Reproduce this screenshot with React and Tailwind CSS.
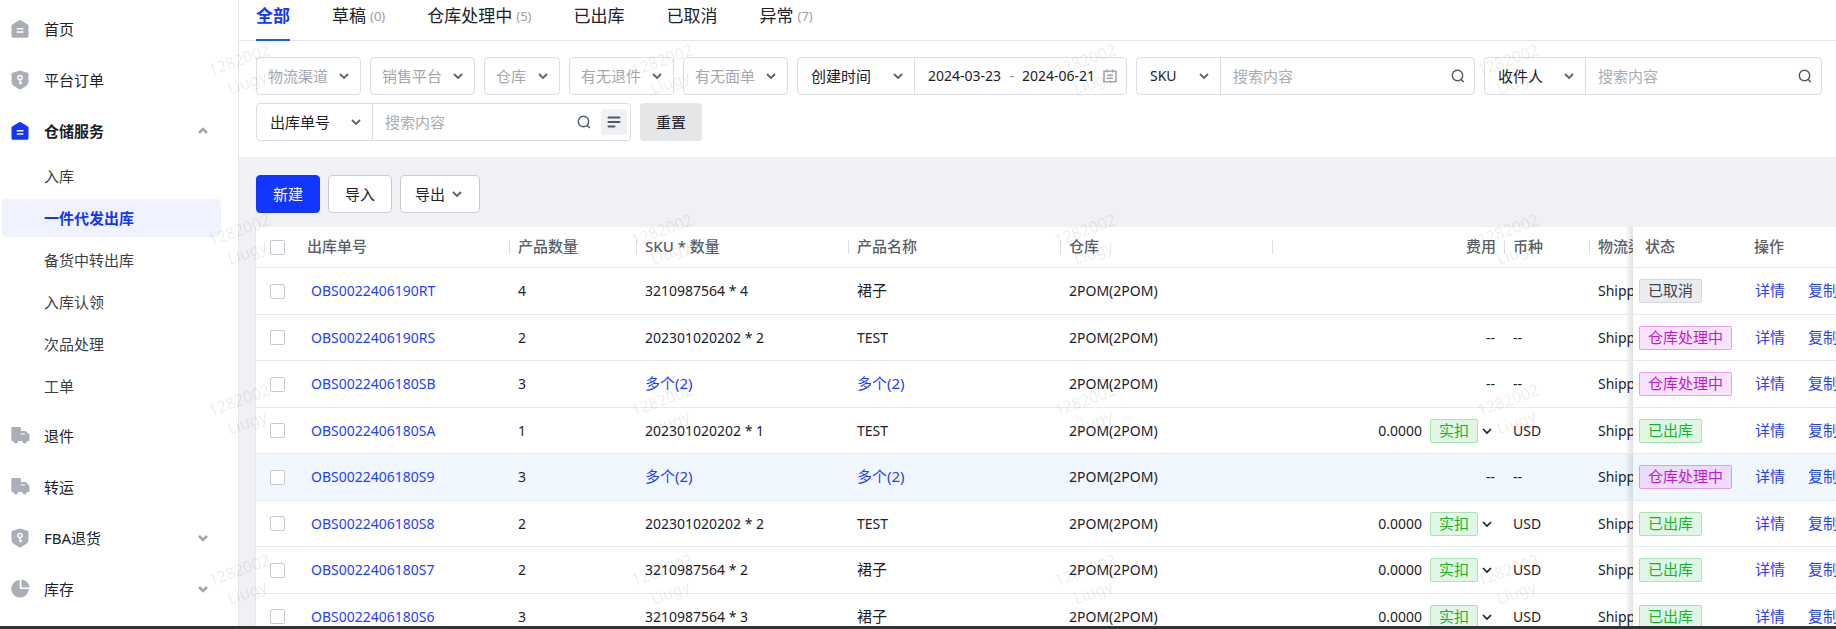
import React from "react";

function Chevron({ className = "", up = false, weight = 2 }) {
  return (
    <svg viewBox="0 0 16 16" className={className} fill="none" stroke="currentColor" strokeWidth={weight} aria-hidden="true">
      <path d={up ? "M4 10l4-4 4 4" : "M4 6l4 4 4-4"} />
    </svg>
  );
}

function SearchIcon() {
  return (
    <svg viewBox="0 0 14 14" className="size-3.5 shrink-0 text-[#4e5969]" fill="none" stroke="currentColor" strokeWidth="1.4" aria-hidden="true">
      <circle cx="6.5" cy="6.5" r="5.2" />
      <path d="M10.2 10.4l2.6 2.6" />
    </svg>
  );
}

function HouseIcon() {
  return (
    <svg viewBox="0 0 18 18" className="size-[18px]" aria-hidden="true">
      <path fill="currentColor" d="M8.2.3a1.6 1.6 0 0 1 1.6 0l7 4.1c.4.3.7.7.7 1.2v10.6c0 .9-.6 1.5-1.5 1.5H2C1.100 17.700.5 17.100.5 16.200V5.600c0-.5.3-.9.7-1.200z" />
      <path stroke="#fff" strokeWidth="1.400" d="M5.800 8.700h6.600M5.800 12h6.600" />
    </svg>
  );
}

function ShieldIcon() {
  return (
    <svg viewBox="0 0 18 20" className="h-5 w-[18px]" aria-hidden="true">
      <path fill="currentColor" d="M9 .6l7.600 2.200c.5.2.9.6.9 1.200v7.500c0 1.700-.7 3.200-2.100 4.300L9.900 19.300a1.500 1.500 0 0 1-1.800 0l-5.500-3.500A5.200 5.200 0 0 1 .5 11.500V4c0-.6.4-1 .9-1.200z" />
      <circle cx="9" cy="7.600" r="2.100" fill="none" stroke="#fff" strokeWidth="1.400" />
      <path fill="none" stroke="#fff" strokeWidth="1.400" d="M9 9.600v5M9 12.700h2.200" />
    </svg>
  );
}

function TruckIcon() {
  return (
    <svg viewBox="0 0 19 17" className="h-[17px] w-[19px]" fill="currentColor" aria-hidden="true">
      <path d="M1.200 0H9c.5 0 .9.400.9.900v3H14c.500 0 .900.200 1.200.600l2.800 3c.300.300.500.700.500 1.100V13c0 .600-.400 1-1 1h-16C.900 14 .3 13.500.3 12.800V1c0-.600.400-1 .900-1z" />
      <circle cx="4.800" cy="14.300" r="2.200" />
      <circle cx="13.600" cy="14.300" r="2.200" />
      <path stroke="#fff" strokeWidth="1" d="M9.500 7h4.500" />
    </svg>
  );
}

function PieIcon() {
  return (
    <svg viewBox="0 0 19 19" className="size-[19px]" fill="currentColor" aria-hidden="true">
      <path d="M8.700 1v7.700c0 .9.500 1.400 1.400 1.400h7.700A8.800 8.800 0 1 1 8.700 1z" />
      <path d="M10.500.5a8.400 8.400 0 0 1 8 8h-7c-.6 0-1-.4-1-1z" />
    </svg>
  );
}

const TOP_ITEMS = [
  { label: "首页", icon: HouseIcon },
  { label: "平台订单", icon: ShieldIcon },
  { label: "仓储服务", icon: HouseIcon, open: true },
];
const SUB_ITEMS = ["入库", "一件代发出库", "备货中转出库", "入库认领", "次品处理", "工单"];
const BOTTOM_ITEMS = [
  { label: "退件", icon: TruckIcon },
  { label: "转运", icon: TruckIcon },
  { label: "FBA退货", icon: ShieldIcon, closed: true },
  { label: "库存", icon: PieIcon, closed: true },
];

function NavItem({ item }) {
  const Icon = item.icon;
  return (
    <a href="#" className={`flex h-[51px] items-center pr-[27px] pl-[11px] text-[#1d2129] ${item.open ? "font-bold" : ""}`}>
      <span className={`flex w-[33px] shrink-0 ${item.open ? "text-[#1236ff]" : "text-[#a9aeb8]"}`}>
        <Icon />
      </span>
      <span className="flex-1">{item.label}</span>
      {(item.open || item.closed) && <Chevron up={item.open} className="size-4 text-[#a0a5af]" weight={2.5} />}
    </a>
  );
}

function Sidebar() {
  return (
    <nav className="w-[239px] shrink-0 overflow-hidden border-r border-[#e5e6eb] bg-white pt-[3px]">
      {TOP_ITEMS.map((item) => (
        <NavItem key={item.label} item={item} />
      ))}
      <div className="flex flex-col gap-1 pt-px pr-[17px] pb-[5px] pl-0.5">
        {SUB_ITEMS.map((label) => (
          <a
            key={label}
            href="#"
            className={`flex h-[38px] items-center rounded pl-[42px] ${
              label === "一件代发出库" ? "bg-[#f0f3ff] font-bold text-[#1236ff]" : "text-[#3a3f47]"
            }`}
          >
            {label}
          </a>
        ))}
      </div>
      {BOTTOM_ITEMS.map((item) => (
        <NavItem key={item.label} item={item} />
      ))}
    </nav>
  );
}

const TABS = [
  { label: "全部", active: true },
  { label: "草稿", count: 0 },
  { label: "仓库处理中", count: 5 },
  { label: "已出库" },
  { label: "已取消" },
  { label: "异常", count: 7 },
];

function Tabs() {
  return (
    <div className="flex h-[41px] gap-[42px] border-b border-[#e5e6eb] pl-[17px] text-[17px]">
      {TABS.map((tab) => (
        <button
          key={tab.label}
          type="button"
          className={`flex h-[41px] items-center gap-1 border-b-2 pb-[7px] whitespace-nowrap ${
            tab.active ? "border-[#165dff] font-bold text-[#1236ff]" : "border-transparent text-[#1d2129]"
          }`}
        >
          {tab.label}
          {tab.count !== undefined && <span className="text-[13px] text-[#9a9fa8]">({tab.count})</span>}
        </button>
      ))}
    </div>
  );
}

function Picker({ label, className, selectClass }) {
  return (
    <label className={`grid h-full items-center ${className}`}>
      <select aria-label={label} className={`col-start-1 row-start-1 h-full w-full appearance-none bg-transparent outline-none ${selectClass}`}>
        <option>{label}</option>
      </select>
      <Chevron className="pointer-events-none col-start-1 row-start-1 mr-2 size-4 justify-self-end text-[#5a626f]" weight={1.8} />
    </label>
  );
}

const BOX = "h-[38px] rounded border border-[#dcdee3] bg-white";

function PlainSelect({ label, className }) {
  return (
    <div className={`${BOX} ${className}`}>
      <Picker label={label} className="" selectClass="pl-[11px] text-[#a3a7af]" />
    </div>
  );
}

function SearchGroup({ label, className, pickerClass, small, more }) {
  return (
    <div className={`flex items-center ${BOX} ${className}`}>
      <Picker label={label} className={`shrink-0 border-r border-[#dcdee3] ${pickerClass}`} selectClass={`pl-[13px] text-[#1d2129] ${small ? "text-sm" : ""}`} />
      <input aria-label={`${label}搜索`} placeholder="搜索内容" className="h-full min-w-0 flex-1 bg-transparent pl-3 outline-none placeholder:text-[#a9adb5]" />
      <SearchIcon />
      {more ? (
        <button type="button" aria-label="批量搜索" className="mr-[3px] ml-2.5 flex size-[26px] shrink-0 items-center justify-center rounded bg-[#f0f1f5] text-[#4e5969]">
          <svg viewBox="0 0 14 12" className="h-3 w-3.5" stroke="currentColor" strokeWidth="2" strokeLinecap="round" aria-hidden="true">
            <path d="M1.500 1.500h11M1.500 6h11M1.500 10.500h6" />
          </svg>
        </button>
      ) : (
        <span className="w-[9px] shrink-0" />
      )}
    </div>
  );
}

function Filters() {
  return (
    <form className="flex flex-wrap gap-x-[9px] gap-y-2 border-b border-[#eceef2] pt-4 pr-3.5 pb-4 pl-[17px]">
      <PlainSelect label="物流渠道" className="w-[105px]" />
      <PlainSelect label="销售平台" className="w-[105px]" />
      <PlainSelect label="仓库" className="w-[76px]" />
      <PlainSelect label="有无退件" className="w-[105px]" />
      <PlainSelect label="有无面单" className="w-[105px]" />
      <div className={`flex w-[330px] items-center ${BOX}`}>
        <Picker label="创建时间" className="w-[117px] shrink-0 border-r border-[#dcdee3]" selectClass="pl-[13px] text-[#1d2129]" />
        <input aria-label="开始日期" defaultValue="2024-03-23" className="w-[88px] bg-transparent pl-[13px] text-sm text-[#1d2129] outline-none" />
        <span className="w-[18px] shrink-0 text-center text-sm text-[#86909c]">-</span>
        <input aria-label="结束日期" defaultValue="2024-06-21" className="w-[76px] bg-transparent pl-px text-sm text-[#1d2129] outline-none" />
        <svg viewBox="0 0 14 14" className="ml-1.5 size-3.5 shrink-0 text-[#a3a7af]" fill="none" stroke="currentColor" strokeWidth="1.600" aria-hidden="true">
          <path d="M1 2.200h12v10.600H1zM4 .5v3M10 .5v3M4 6.200h6M4 9.200h6" />
        </svg>
      </div>
      <SearchGroup label="SKU" className="w-[339px]" pickerClass="w-[84px]" small />
      <SearchGroup label="收件人" className="w-[338px]" pickerClass="w-[101px]" />
      <SearchGroup label="出库单号" className="w-[375px]" pickerClass="w-[116px]" more />
      <button type="button" className="h-[38px] rounded bg-[#e5e6e8] px-4 text-[#1d2129]">
        重置
      </button>
    </form>
  );
}

const TAG_STYLES = {
  已取消: "border-[#d6d8de] bg-[#ebecf0] text-[#3f444d]",
  仓库处理中: "border-[#d91bdd]/35 bg-[#d01be0]/12 text-[#c414d6]",
  已出库: "border-[#a9e6b0] bg-[#12b52a]/12 text-[#12b52a]",
  实扣: "border-[#a9e6b0] bg-[#12b52a]/12 text-[#12b52a]",
};

function Tag({ text }) {
  return <span className={`inline-flex h-6 items-center rounded-xs border px-2 whitespace-nowrap text-[15px] ${TAG_STYLES[text]}`}>{text}</span>;
}

const ROWS = [
  { id: "OBS0022406190RT", qty: 4, sku: "3210987564 * 4", name: "裙子", fee: "", status: "已取消" },
  { id: "OBS0022406190RS", qty: 2, sku: "202301020202 * 2", name: "TEST", fee: "--", status: "仓库处理中" },
  { id: "OBS0022406180SB", qty: 3, sku: "多个(2)", name: "多个(2)", fee: "--", status: "仓库处理中" },
  { id: "OBS0022406180SA", qty: 1, sku: "202301020202 * 1", name: "TEST", fee: "0.0000", status: "已出库" },
  { id: "OBS0022406180S9", qty: 3, sku: "多个(2)", name: "多个(2)", fee: "--", status: "仓库处理中", current: true },
  { id: "OBS0022406180S8", qty: 2, sku: "202301020202 * 2", name: "TEST", fee: "0.0000", status: "已出库" },
  { id: "OBS0022406180S7", qty: 2, sku: "3210987564 * 2", name: "裙子", fee: "0.0000", status: "已出库" },
  { id: "OBS0022406180S6", qty: 3, sku: "3210987564 * 3", name: "裙子", fee: "0.0000", status: "已出库" },
];

const COLUMNS = [
  { label: "出库单号", width: "w-[211px]", sep: true },
  { label: "产品数量", width: "w-[127px]", sep: true },
  { label: "SKU * 数量", width: "w-[212px]", sep: true },
  { label: "产品名称", width: "w-[212px]", sep: true },
  { label: "仓库", width: "w-[212px]", sep: true },
  { label: "费用", width: "w-[232px]", sep: true, right: true },
  { label: "币种", width: "w-[85px]", sep: true },
  { label: "物流渠道", width: "w-[212px]" },
];

const LINE = "border-b border-[#e8e9ed]";
const CHECK = "block size-[15px] appearance-none rounded-xs border border-[#c5c9d1] bg-white";
const CJK = "text-[15px]";
const LINK = "text-[#1f40ff]";
const EDGE_SHADOW =
  "before:pointer-events-none before:absolute before:inset-y-0 before:right-full before:w-2 before:bg-linear-to-l before:from-black/12 before:to-transparent";

function ItemText({ text }) {
  if (text.startsWith("多个")) {
    return (
      <a href="#" className={`${CJK} ${LINK}`}>
        {text}
      </a>
    );
  }
  return <span className={text === "裙子" ? CJK : ""}>{text}</span>;
}

function OrdersTable() {
  return (
    <div className="overflow-x-auto border-l border-[#e8e9ed] bg-white">
      <table className="w-full min-w-max table-fixed border-separate border-spacing-0 text-left text-sm whitespace-nowrap text-[#1d2129]">
        <thead>
          <tr className="h-[41px] text-[15px] text-[#5a5f69]">
            <th className={`w-[43px] p-0 pl-3.5 ${LINE}`}>
              <input type="checkbox" aria-label="全选" className={CHECK} />
            </th>
            {COLUMNS.map((col) => (
              <th key={col.label} className={`p-0 font-medium ${col.width} ${LINE}`}>
                <div className="flex items-center">
                  <span className={`flex-1 px-2 ${col.right ? "text-right" : ""}`}>{col.label}</span>
                  {col.sep && <span className="h-3.5 w-px bg-[#dcdee3]" />}
                </div>
              </th>
            ))}
            <th className={`sticky right-[90px] w-[113px] bg-white p-0 pl-3 font-medium ${EDGE_SHADOW} ${LINE}`}>状态</th>
            <th className={`sticky right-0 w-[90px] bg-white p-0 pl-2 font-medium ${LINE}`}>操作</th>
          </tr>
        </thead>
        <tbody>
          {ROWS.map((row) => {
            const bg = row.current ? "bg-[#f0f7ff]" : "bg-white";
            return (
              <tr key={row.id} className={`odd:h-[47px] even:h-[46px] ${bg}`}>
                <td className={`p-0 pl-3.5 ${LINE}`}>
                  <input type="checkbox" aria-label={row.id} className={CHECK} />
                </td>
                <td className={`p-0 pl-3 ${LINE}`}>
                  <a href="#" className={LINK}>
                    {row.id}
                  </a>
                </td>
                <td className={`p-0 pl-2 ${LINE}`}>{row.qty}</td>
                <td className={`p-0 pl-2 ${LINE}`}>
                  <ItemText text={row.sku} />
                </td>
                <td className={`p-0 pl-2 ${LINE}`}>
                  <ItemText text={row.name} />
                </td>
                <td className={`p-0 pl-2 ${LINE}`}>2POM(2POM)</td>
                <td className={`p-0 pr-2.5 text-right ${LINE}`}>
                  {row.fee === "0.0000" ? (
                    <span className="flex items-center justify-end">
                      {row.fee}
                      <span className="mr-px ml-2 flex">
                        <Tag text="实扣" />
                      </span>
                      <Chevron className="size-4" weight={1.7} />
                    </span>
                  ) : (
                    row.fee
                  )}
                </td>
                <td className={`p-0 pl-2 ${LINE}`}>{row.fee === "0.0000" ? "USD" : row.fee}</td>
                <td className={`p-0 pl-2 ${LINE}`}>Shipping</td>
                <td className={`sticky right-[90px] p-0 pl-1.5 ${EDGE_SHADOW} ${bg} ${LINE}`}>
                  <div className="flex">
                    <Tag text={row.status} />
                  </div>
                </td>
                <td className={`sticky right-0 overflow-hidden p-0 pl-[9px] ${bg} ${LINE}`}>
                  <div className={`flex gap-[23px] ${CJK} ${LINK}`}>
                    <a href="#">详情</a>
                    <a href="#">复制</a>
                  </div>
                </td>
              </tr>
            );
          })}
        </tbody>
      </table>
    </div>
  );
}

function Watermark() {
  return (
    <div aria-hidden="true" className="pointer-events-none absolute inset-0 overflow-hidden">
      <div className="-mt-3.5 grid auto-rows-[170px] grid-cols-[repeat(auto-fill,423px)] pl-8">
        {Array.from({ length: 16 }, (_, i) => (
          <div key={i} className="flex items-center justify-center">
            <div className="-rotate-20 text-center text-base leading-6 text-black/7">
              1282002
              <br />
              Liugy
            </div>
          </div>
        ))}
      </div>
    </div>
  );
}

const BUTTON = "flex h-[38px] items-center rounded border";

export default function App() {
  return (
    <div className="relative flex h-screen flex-col overflow-hidden bg-white font-['Noto_Sans','Noto_Sans_CJK_SC',sans-serif] text-[15px] leading-6">
      <div className="flex min-h-0 flex-1">
        <Sidebar />
        <main className="min-w-0 flex-1 overflow-hidden bg-[#f0f1f5]">
          <div className="bg-white">
            <Tabs />
            <Filters />
          </div>
          <div className="pt-[17px] pl-4">
            <div className="flex gap-2 pb-3.5 pl-px">
              <button type="button" className={`${BUTTON} border-[#1236ff] bg-[#1236ff] px-4 text-white`}>
                新建
              </button>
              <button type="button" className={`${BUTTON} border-[#c9cdd4] bg-white px-4 text-[#1d2129]`}>
                导入
              </button>
              <button type="button" className={`${BUTTON} gap-1 border-[#c9cdd4] bg-white px-3.5 text-[#1d2129]`}>
                导出
                <Chevron className="size-4 text-[#5a626f]" weight={1.8} />
              </button>
            </div>
            <OrdersTable />
          </div>
        </main>
      </div>
      <div className="h-[3px] shrink-0 bg-[#323333]" />
      <Watermark />
    </div>
  );
}
